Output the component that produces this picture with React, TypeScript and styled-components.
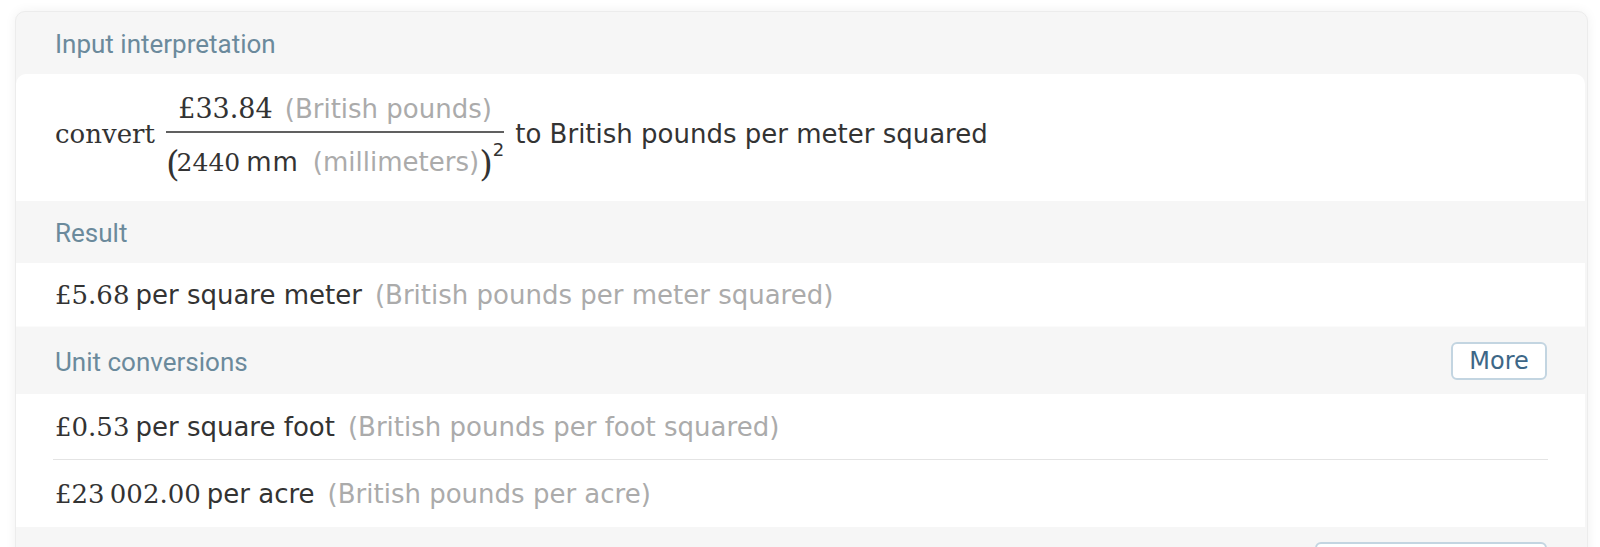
import styled, { createGlobalStyle } from "styled-components";

const GlobalStyle = createGlobalStyle`
  html, body {
    margin: 0;
    padding: 0;
    background: #ffffff;
    overflow: hidden;
  }
  body {
    font-family: Roboto, "Liberation Sans", sans-serif;
  }
`;

const Card = styled.div`
  margin: 11px 12px 0 15px;
  padding: 0 2px 0 0;
  background: #f6f6f6;
  border: 1px solid #ececec;
  border-radius: 10px;
  box-shadow: 0 0 12px rgba(0, 0, 0, 0.06);
`;

const PodHeader = styled.div<{ $tall?: boolean }>`
  display: flex;
  align-items: center;
  justify-content: space-between;
  box-sizing: border-box;
  min-height: ${(p) => (p.$tall ? "67px" : "62px")};
  padding: 0 38px 0 39px;
`;

const PodTitle = styled.h2`
  margin: 0;
  font-family: Roboto, "Liberation Sans", sans-serif;
  font-weight: 400;
  font-size: 26px;
  line-height: 1;
  color: #6b8a9c;
  padding-top: 2px;
`;

const PodButton = styled.button<{ $wide?: boolean }>`
  box-sizing: border-box;
  height: 38px;
  width: ${(p) => (p.$wide ? "232px" : "96px")};
  margin-left: auto;
  padding: 0;
  background: #ffffff;
  border: 2px solid #c3d5e1;
  border-radius: 6px;
  font-family: "DejaVu Sans", Verdana, sans-serif;
  font-size: 24px;
  color: #3d6787;
  cursor: pointer;
`;

const PodBody = styled.div<{ $first?: boolean }>`
  background: #ffffff;
  border-radius: ${(p) => (p.$first ? "10px 10px 0 0" : "0")};
`;

const Interpretation = styled.div`
  display: flex;
  align-items: center;
  height: 127px;
  padding: 0 39px 8px;
  box-sizing: border-box;
  color: #333333;
`;

const Serif = styled.span<{ $size?: number }>`
  font-family: "DejaVu Serif", "Liberation Serif", serif;
  font-size: ${(p) => p.$size ?? 26}px;
  color: #333333;
  white-space: pre;
`;

const Sans = styled.span<{ $spread?: number }>`
  font-family: "DejaVu Sans", Verdana, sans-serif;
  font-size: 26px;
  color: #333333;
  white-space: pre;
  letter-spacing: ${(p) => p.$spread ?? 0}px;
`;

const Note = styled.span`
  font-family: "DejaVu Sans", Verdana, sans-serif;
  font-size: 26px;
  color: #ababab;
  white-space: pre;
`;

const Fraction = styled.span`
  display: inline-flex;
  flex-direction: column;
  align-items: center;
  margin: 10px 11px 0 11px;
`;

const Numerator = styled.span`
  display: block;
  line-height: 34px;
  white-space: nowrap;
`;

const Denominator = styled.span`
  display: block;
  line-height: 40px;
  white-space: nowrap;
`;

const FracBar = styled.span`
  align-self: stretch;
  height: 2px;
  background: #606060;
  margin: 1px 0 8px;
`;

const Paren = styled.span<{ $open?: boolean }>`
  font-family: "DejaVu Serif", "Liberation Serif", serif;
  font-size: 35px;
  font-weight: 300;
  color: #333333;
  line-height: 1;
  vertical-align: -5px;
  margin-right: ${(p) => (p.$open ? "-3px" : "0")};
`;

const Sup = styled.span`
  font-family: "DejaVu Sans", Verdana, sans-serif;
  font-size: 18px;
  color: #333333;
  line-height: 1;
  vertical-align: 15px;
`;

const Line = styled.div<{ $h: number; $divider?: boolean }>`
  display: flex;
  align-items: center;
  box-sizing: border-box;
  height: ${(p) => p.$h}px;
  margin: 0 37px;
  padding: 0 2px;
  border-bottom: ${(p) => (p.$divider ? "1px solid #e4e4e4" : "none")};
`;

const ResultBody = styled(PodBody)`
  border-bottom: 1px solid #fbfbfb;
`;

type Row = { value: string; unit: string; note: string };

const conversions: Row[] = [
  { value: "£0.53", unit: "per square foot", note: "(British pounds per foot squared)" },
  { value: "£23\u2009002.00", unit: "per acre", note: "(British pounds per acre)" },
];

function Quantity({ value, unit, note }: Row) {
  return (
    <>
      <Serif>{value}</Serif>
      <Sans style={{ marginLeft: 6 }}>{unit}</Sans>
      <Note style={{ marginLeft: 13 }}>{note}</Note>
    </>
  );
}

export default function App() {
  return (
    <>
      <GlobalStyle />
      <Card>
        <PodHeader>
          <PodTitle>Input interpretation</PodTitle>
        </PodHeader>
        <PodBody $first>
          <Interpretation>
            <Serif>convert</Serif>
            <Fraction>
              <Numerator>
                <Serif $size={27}>£33.84</Serif>
                <Note style={{ marginLeft: 12 }}>(British pounds)</Note>
              </Numerator>
              <FracBar />
              <Denominator>
                <Paren $open>(</Paren>
                <Serif $size={25}>2440</Serif>
                <Sans $spread={1} style={{ marginLeft: 6 }}>mm</Sans>
                <Note style={{ marginLeft: 14 }}>(millimeters)</Note>
                <Paren>)</Paren>
                <Sup>2</Sup>
              </Denominator>
            </Fraction>
            <Sans>to British pounds per meter squared</Sans>
          </Interpretation>
        </PodBody>

        <PodHeader>
          <PodTitle>Result</PodTitle>
        </PodHeader>
        <ResultBody>
          <Line $h={63}>
            <Quantity
              value="£5.68"
              unit="per square meter"
              note="(British pounds per meter squared)"
            />
          </Line>
        </ResultBody>

        <PodHeader $tall>
          <PodTitle>Unit conversions</PodTitle>
          <PodButton>More</PodButton>
        </PodHeader>
        <PodBody>
          {conversions.map((row, i) => (
            <Line key={row.unit} $h={i === 0 ? 66 : 67} $divider={i === 0}>
              <Quantity {...row} />
            </Line>
          ))}
        </PodBody>

        <PodHeader $tall>
          <PodButton $wide aria-label="Show details" />
        </PodHeader>
      </Card>
    </>
  );
}
